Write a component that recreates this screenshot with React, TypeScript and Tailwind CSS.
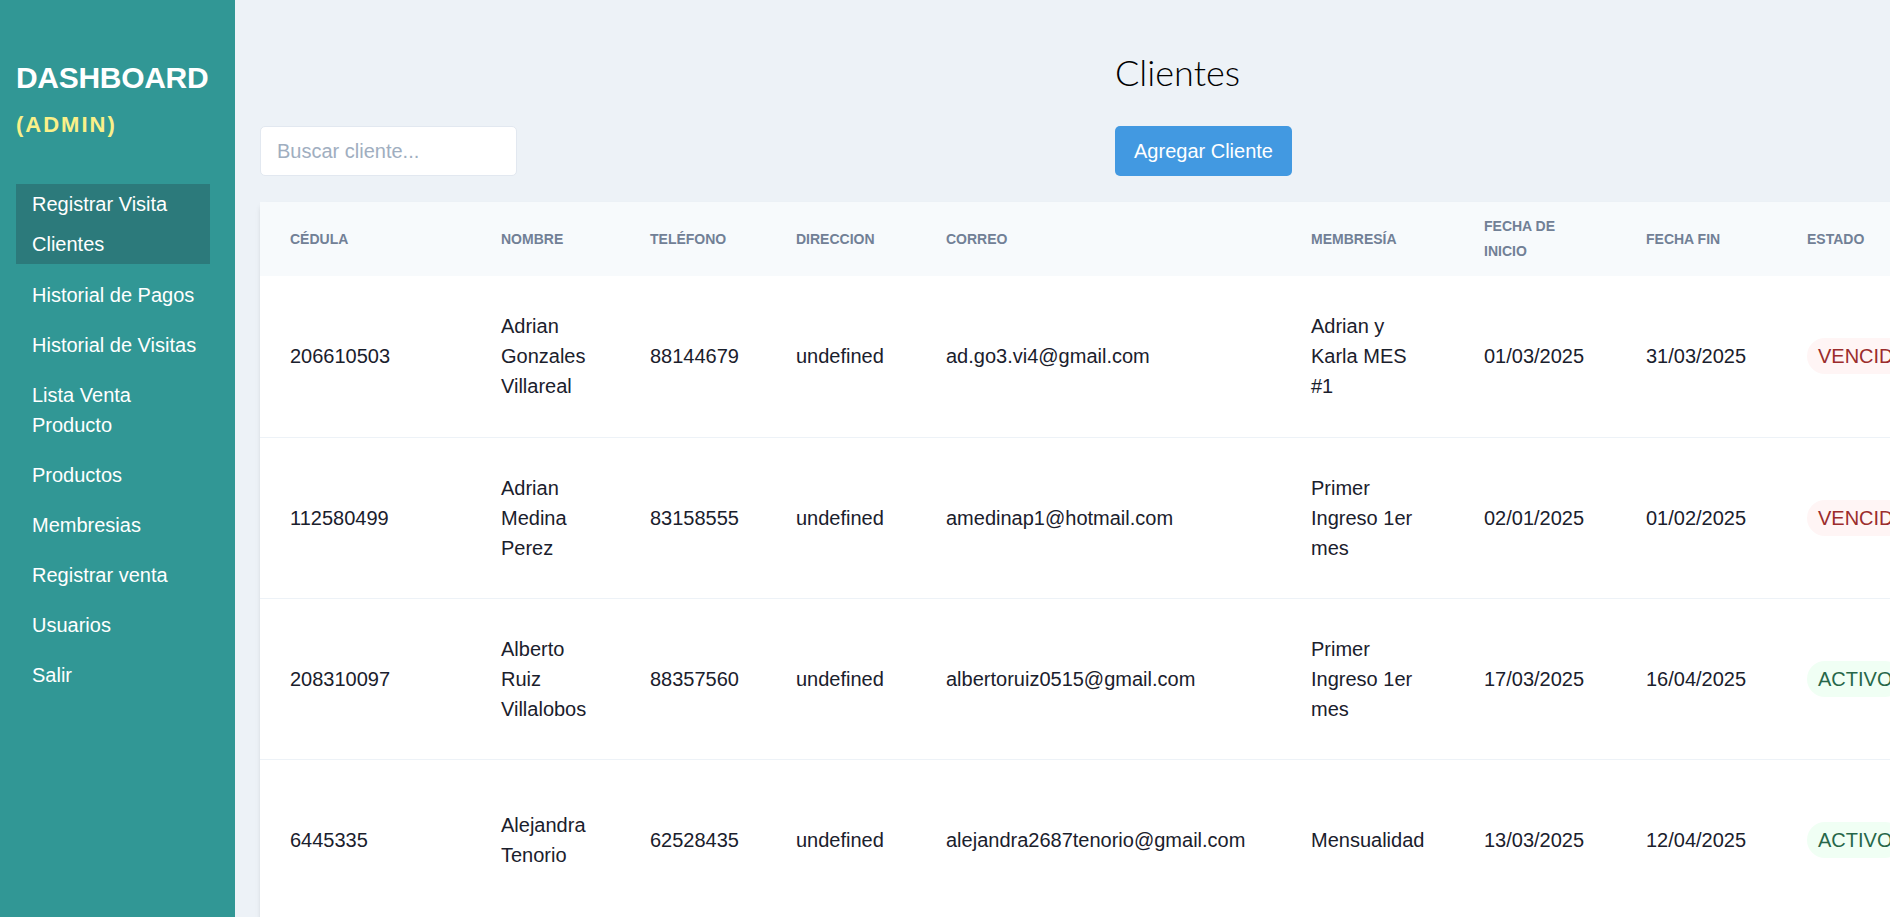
import React from 'react'

type Cliente = {
  cedula: string
  nombre: string
  telefono: string
  direccion: string
  correo: string
  membresia: string
  inicio: string
  fin: string
  estado: 'VENCIDO' | 'ACTIVO'
}

const clientes: Cliente[] = [
  {
    cedula: '206610503',
    nombre: 'Adrian Gonzales Villareal',
    telefono: '88144679',
    direccion: 'undefined',
    correo: 'ad.go3.vi4@gmail.com',
    membresia: 'Adrian y Karla MES #1',
    inicio: '01/03/2025',
    fin: '31/03/2025',
    estado: 'VENCIDO',
  },
  {
    cedula: '112580499',
    nombre: 'Adrian Medina Perez',
    telefono: '83158555',
    direccion: 'undefined',
    correo: 'amedinap1@hotmail.com',
    membresia: 'Primer Ingreso 1er mes',
    inicio: '02/01/2025',
    fin: '01/02/2025',
    estado: 'VENCIDO',
  },
  {
    cedula: '208310097',
    nombre: 'Alberto Ruiz Villalobos',
    telefono: '88357560',
    direccion: 'undefined',
    correo: 'albertoruiz0515@gmail.com',
    membresia: 'Primer Ingreso 1er mes',
    inicio: '17/03/2025',
    fin: '16/04/2025',
    estado: 'ACTIVO',
  },
  {
    cedula: '6445335',
    nombre: 'Alejandra Tenorio',
    telefono: '62528435',
    direccion: 'undefined',
    correo: 'alejandra2687tenorio@gmail.com',
    membresia: 'Mensualidad',
    inicio: '13/03/2025',
    fin: '12/04/2025',
    estado: 'ACTIVO',
  },
]

const navItems = [
  'Historial de Pagos',
  'Historial de Visitas',
  'Lista Venta Producto',
  'Productos',
  'Membresias',
  'Registrar venta',
  'Usuarios',
  'Salir',
]

// widths taken from the column starts in the screenshot
const columns = [
  { label: 'Cédula', width: 'w-[211px]' },
  { label: 'Nombre', width: 'w-[149px]' },
  { label: 'Teléfono', width: 'w-[146px]' },
  { label: 'Direccion', width: 'w-[150px]' },
  { label: 'Correo', width: 'w-[365px]' },
  { label: 'Membresía', width: 'w-[173px]' },
  { label: 'Fecha de Inicio', width: 'w-[162px]' },
  { label: 'Fecha Fin', width: 'w-[161px]' },
  { label: 'Estado', width: 'w-[200px]' },
]

const Sidebar = () => (
  <aside className="w-[235px] shrink-0 bg-[#319795] pl-4 pt-[60px] text-white">
    <h1 className="text-[30px] font-bold leading-[36px] tracking-[-0.3px]">DASHBOARD</h1>
    <div className="mt-[15px] text-[22px] font-bold leading-[28px] tracking-[2px] text-[#faf089]">(ADMIN)</div>
    <nav className="mt-[45px]">
      <div className="w-[194px] bg-[#2c7a7b]">
        <a className="block h-[40px] pl-4 text-[20px] leading-[40px]">Registrar Visita</a>
        <a className="block h-[40px] pl-4 text-[20px] leading-[40px]">Clientes</a>
      </div>
      {navItems.map((item) => (
        <a key={item} className="mt-[10px] block w-[194px] py-[5px] pl-4 pr-2 text-[20px] leading-[30px] first-of-type:mt-[11px]">
          {item}
        </a>
      ))}
    </nav>
  </aside>
)

const EstadoBadge = ({ estado }: { estado: Cliente['estado'] }) =>
  estado === 'VENCIDO' ? (
    <span className="inline-block h-[36px] rounded-full bg-[#fff5f5] px-[11px] leading-[36px] text-[#9b2c2c]">VENCIDO</span>
  ) : (
    <span className="inline-block h-[36px] rounded-full bg-[#f0fff4] px-[11px] leading-[36px] text-[#276749]">ACTIVO</span>
  )

export default function App() {
  return (
    <div className="flex h-screen overflow-hidden font-['Liberation_Sans',Arial,sans-serif] text-[#1a202c]">
      <Sidebar />
      <main className="min-w-0 flex-1 overflow-hidden bg-[#edf2f7] px-[25px] pt-[51px]">
        <div className="flex items-end">
          <input
            className="h-[50px] w-[257px] rounded-[5px] border border-[#e2e8f0] bg-white pl-4 text-[20px] outline-none placeholder:text-[#a0aec0]"
            placeholder="Buscar cliente..."
          />
          <div className="ml-[598px] flex flex-col items-start">
            <h2 className="font-['Lato',sans-serif] text-[36px] font-light leading-[43px] text-black">Clientes</h2>
            <button className="mt-[32px] h-[50px] w-[177px] rounded-[5px] bg-[#4299e1] text-[20px] text-white">
              Agregar Cliente
            </button>
          </div>
        </div>

        <div className="mt-[26px] w-max bg-white shadow-md">
          <table className="w-[1717px] table-fixed">
            <colgroup>
              {columns.map((c) => (
                <col key={c.label} className={c.width} />
              ))}
            </colgroup>
            <thead>
              <tr className="bg-[#f7fafc]">
                {columns.map((c) => (
                  <th
                    key={c.label}
                    className="px-[30px] py-3 text-left align-middle text-[14px] font-bold uppercase leading-[25px] text-[#718096]"
                  >
                    {c.label}
                  </th>
                ))}
              </tr>
            </thead>
            <tbody className="text-[20px] leading-[30px]">
              {clientes.map((c) => (
                <tr key={c.cedula} className="border-b border-[#edf2f7]">
                  <td className="h-[161px] px-[30px] align-middle">{c.cedula}</td>
                  <td className="px-[30px] align-middle">{c.nombre}</td>
                  <td className="px-[30px] align-middle">{c.telefono}</td>
                  <td className="px-[30px] align-middle">{c.direccion}</td>
                  <td className="px-[30px] align-middle">{c.correo}</td>
                  <td className="px-[30px] align-middle">{c.membresia}</td>
                  <td className="px-[30px] align-middle">{c.inicio}</td>
                  <td className="px-[30px] align-middle">{c.fin}</td>
                  <td className="px-[30px] align-middle">
                    <EstadoBadge estado={c.estado} />
                  </td>
                </tr>
              ))}
            </tbody>
          </table>
        </div>
      </main>
    </div>
  )
}
